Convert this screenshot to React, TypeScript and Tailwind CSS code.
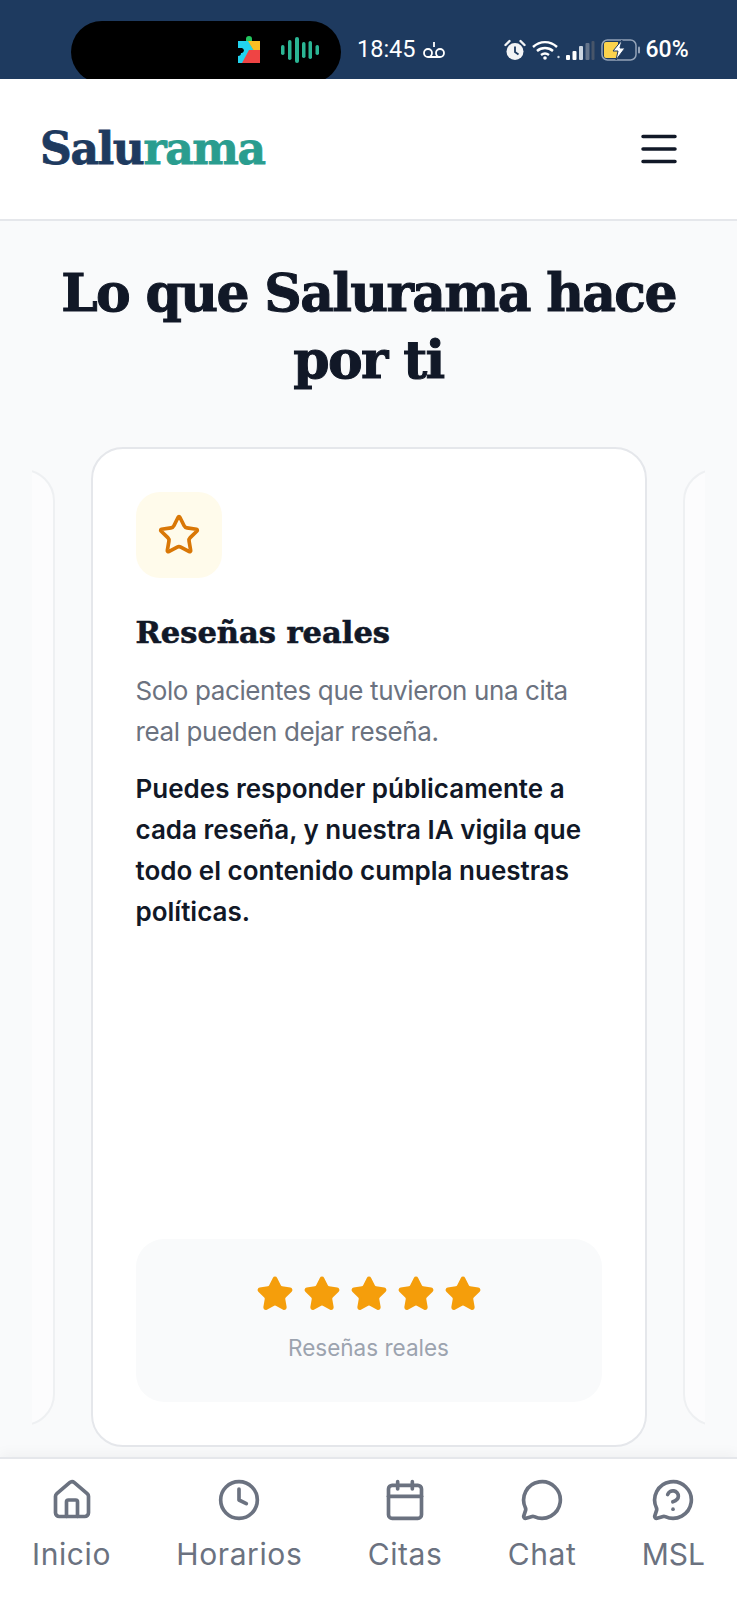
import { House, Clock, Calendar, MessageCircle, MessageCircleQuestionMark, Star } from "lucide-react";

/* Salurama — pantalla móvil: "Lo que Salurama hace por ti" */

const NAV_ITEMS = [
  { label: "Inicio", icon: House, tracking: "tracking-[0.6px]" },
  { label: "Horarios", icon: Clock, tracking: "tracking-[0.6px]" },
  { label: "Citas", icon: Calendar, tracking: "tracking-[0.6px]" },
  { label: "Chat", icon: MessageCircle, tracking: "tracking-[0.6px]" },
  { label: "MSL", icon: MessageCircleQuestionMark, tracking: "tracking-normal" },
];

function PlayServicesIcon() {
  return (
    <svg width="24" height="28" viewBox="0 0 24 28">
      <path d="M9 5V3a3 3 0 0 1 6 0v2h8v9H1V5z" fill="#22c55e" />
      <path d="M1 5h10l6 10-8 12H1v-7a3 3 0 0 0 3-3 3 3 0 0 0-3-3z" fill="#22d3ee" />
      <path d="M23 5v13l-6-3-6-10z" fill="#fbbf24" />
      <path d="M23 14v13H5l7-13z" fill="#ef4444" />
      <path d="M1 12h4a2.600 2.600 0 0 1 0 5H1z" fill="#000" />
    </svg>
  );
}

function SoundWaveIcon() {
  return (
    <svg width="38" height="26" viewBox="0 0 38 26" fill="#2bb594">
      <rect x="0" y="8" width="3.500" height="10" rx="1.700" />
      <rect x="7" y="3" width="3.500" height="20" rx="1.700" />
      <rect x="14" y="0" width="4" height="26" rx="2" />
      <rect x="21" y="5" width="3.500" height="16" rx="1.700" />
      <rect x="27.500" y="4" width="3.500" height="18" rx="1.700" />
      <rect x="34.500" y="8" width="3.500" height="10" rx="1.700" />
    </svg>
  );
}

function VoicemailIcon() {
  return (
    <svg width="24" height="20" viewBox="0 0 24 20" fill="none" stroke="#fff" strokeWidth="1.800">
      <circle cx="6" cy="13" r="4" />
      <circle cx="18" cy="13" r="4" />
      <path d="M6 17h12M12 2v5" />
    </svg>
  );
}

function AlarmIcon() {
  return (
    <svg width="22" height="22" viewBox="0 0 22 22">
      <circle cx="11" cy="12.500" r="8.500" fill="#f3f4f6" />
      <path d="M11 7.500v5.500l3.500 2.500" stroke="#1e3a5f" strokeWidth="1.800" fill="none" />
      <path d="M1.500 6 5.500 2M20.500 6l-4-4" stroke="#f3f4f6" strokeWidth="2.400" strokeLinecap="round" />
    </svg>
  );
}

function WifiIcon() {
  return (
    <svg width="28" height="20" viewBox="0 0 28 20" fill="none" stroke="#fff" strokeWidth="2.400">
      <path d="M1 7c7-6.500 17-6.500 24 0M5 11c4.500-4 11.500-4 16 0M9 15c2.500-2 5.500-2 8 0" />
      <circle cx="13" cy="18" r="1.800" fill="#fff" stroke="none" />
      <circle cx="26.500" cy="17" r="1.200" fill="#cbd5e1" stroke="none" />
    </svg>
  );
}

function SignalIcon() {
  return (
    <svg width="29" height="20" viewBox="0 0 29 20">
      <rect x="0" y="15" width="4" height="5" rx="1" fill="#fff" />
      <rect x="6.500" y="11" width="4" height="9" rx="1" fill="#fff" />
      <rect x="13" y="6" width="4" height="14" rx="1" fill="#cbd5e1" />
      <rect x="19.500" y="3" width="4" height="17" rx="1" fill="#64748b" />
      <rect x="25.500" y="1" width="3" height="19" rx="1" fill="#475569" />
    </svg>
  );
}

function BatteryIcon() {
  return (
    <svg width="40" height="22" viewBox="0 0 40 22">
      <rect x="1" y="1" width="34" height="20" rx="5.500" fill="none" stroke="#94a3b8" strokeWidth="1.500" />
      <path d="M3 5a2 2 0 0 1 2-2h12v16H5a2 2 0 0 1-2-2z" fill="#fcd34d" />
      <rect x="37" y="7.500" width="2" height="7" rx="1" fill="#94a3b8" />
      <path d="M21 1 12 12h5l-2 9 9-12h-5z" fill="#fff" stroke="#1e3a5f" strokeWidth="1" />
    </svg>
  );
}

function StatusBar() {
  return (
    <div className="flex h-[79px] shrink-0 items-start overflow-hidden bg-[#1e3a5f] pl-[71px] text-white">
      <div className="mt-[21px] flex h-[62px] w-[270px] items-center justify-end gap-[20px] rounded-full bg-black pr-[22px] pb-[4px]">
        <PlayServicesIcon />
        <SoundWaveIcon />
      </div>
      <div className="ml-[16px] flex h-[79px] items-center gap-[6px] pt-[21px]">
        <span className="font-['Roboto',sans-serif] text-[23.5px]">18:45</span>
        <VoicemailIcon />
      </div>
      <div className="ml-[58px] flex h-[79px] items-center gap-[6px] pt-[21px]">
        <AlarmIcon />
        <WifiIcon />
        <SignalIcon />
        <BatteryIcon />
        <span className="-ml-[1px] font-['Roboto',sans-serif] text-[23px] font-medium">60%</span>
      </div>
    </div>
  );
}

function Header() {
  return (
    <header className="flex h-[142px] shrink-0 items-center justify-between border-b-2 border-[#e5e7eb] bg-white pr-[60px] pl-[40px]">
      <div className="font-['DejaVu_Serif',serif] text-[44px] font-bold tracking-[-1.4px] [-webkit-text-stroke:0.8px]">
        <span className="text-[#1e3a5f]">Salu</span>
        <span className="text-[#2a9d8f]">rama</span>
      </div>
      <svg width="36" height="32" viewBox="0 0 36 32" stroke="#111827" strokeWidth="3.500" strokeLinecap="round">
        <path d="M2 3.500h32M2 16h32M2 28.500h32" />
      </svg>
    </header>
  );
}

function SideCard() {
  return <div className="h-[957px] w-[510px] shrink-0 rounded-[32px] border-2 border-[#e5e7eb] bg-white opacity-50" />;
}

function FeatureCard() {
  return (
    <div className="flex h-[1000px] w-[556px] shrink-0 flex-col rounded-[32px] border-2 border-[#e5e7eb] bg-white px-[43px] pt-[43px] pb-[43px]">
      <div className="flex h-[86px] w-[86px] items-center justify-center rounded-[24px] bg-[#fffbeb]">
        <Star size={44} strokeWidth={2} className="text-[#d97706]" />
      </div>
      <h2 className="mt-[30px] font-['DejaVu_Serif',serif] text-[30.500px] leading-[48px] font-bold text-[#111827] [-webkit-text-stroke:0.6px]">
        Reseñas reales
      </h2>
      <p className="mt-[14px] text-[26px] leading-[41px] tracking-[-0.4px] text-[#6b7280]">
        Solo pacientes que tuvieron una cita real pueden dejar reseña.
      </p>
      <p className="mt-[16px] text-[26px] leading-[41px] font-semibold text-[#111827]">
        Puedes responder públicamente a cada reseña, y nuestra IA vigila que todo el contenido cumpla nuestras políticas.
      </p>
      <div className="mt-auto flex h-[163px] flex-col items-center rounded-[28px] bg-[#f9fafb] pt-[36px]">
        <div className="flex gap-[9px]">
          {[0, 1, 2, 3, 4].map((i) => (
            <Star key={i} size={38} fill="#f59e0b" stroke="#f59e0b" strokeWidth={2} />
          ))}
        </div>
        <span className="mt-[19px] text-[22.500px] leading-[32px] text-[#9ca3af]">Reseñas reales</span>
      </div>
    </div>
  );
}

function BottomNav() {
  return (
    <nav className="relative flex h-[143px] shrink-0 items-start justify-between border-t-2 border-[#e5e7eb] bg-white px-[32px] pt-[19px] shadow-[0_-4px_12px_rgba(0,0,0,0.04)]">
      {NAV_ITEMS.map(({ label, icon: Icon, tracking }) => (
        <div key={label} className="flex flex-col items-center text-[#6b7280]">
          <Icon size={44} strokeWidth={2} />
          <span className={`mt-[10px] text-[30px] leading-[44px] ${tracking}`}>{label}</span>
        </div>
      ))}
    </nav>
  );
}

export default function App() {
  return (
    <div className="flex h-[1600px] w-[737px] flex-col overflow-hidden bg-[#f9fafb] font-['Inter',sans-serif]">
      <StatusBar />
      <Header />
      <main className="flex min-h-0 flex-1 flex-col">
        <h1 className="mt-[38px] px-[40px] text-center font-['DejaVu_Serif',serif] text-[52px] leading-[67px] font-bold tracking-[-1.650px] text-[#111827] [-webkit-text-stroke:1px]">
          Lo que Salurama hace por ti
        </h1>
        <div className="mx-[32px] mt-[54px] flex h-[1000px] items-center justify-center gap-[36px] overflow-hidden">
          <SideCard />
          <FeatureCard />
          <SideCard />
        </div>
      </main>
      <BottomNav />
    </div>
  );
}
